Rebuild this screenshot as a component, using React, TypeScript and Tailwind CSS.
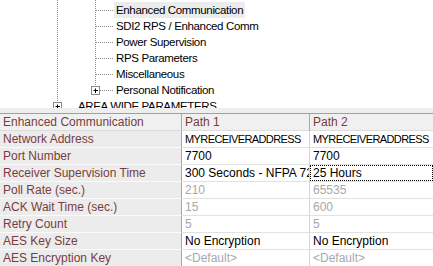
import { Fragment } from 'react'

type Row = {
  label: string
  p1: string
  p2: string
  dim?: boolean
  caps?: boolean
}

const rows: Row[] = [
  { label: 'Network Address', p1: 'MYRECEIVERADDRESS', p2: 'MYRECEIVERADDRESS', caps: true },
  { label: 'Port Number', p1: '7700', p2: '7700' },
  { label: 'Receiver Supervision Time', p1: '300 Seconds - NFPA 72 2010', p2: '25 Hours' },
  { label: 'Poll Rate (sec.)', p1: '210', p2: '65535', dim: true },
  { label: 'ACK Wait Time (sec.)', p1: '15', p2: '600', dim: true },
  { label: 'Retry Count', p1: '5', p2: '5', dim: true },
  { label: 'AES Key Size', p1: 'No Encryption', p2: 'No Encryption' },
  { label: 'AES Encryption Key', p1: '<Default>', p2: '<Default>', dim: true },
]

const treeItems = [
  'Enhanced Communication',
  'SDI2 RPS / Enhanced Comm',
  'Power Supervision',
  'RPS Parameters',
  'Miscellaneous',
  'Personal Notification',
]

function TreeLines() {
  const dot = { stroke: '#8a8a8a', strokeDasharray: '1 1', strokeWidth: 1 }
  return (
    <svg className="absolute left-0 top-0" width="140" height="108">
      <line x1="57.5" y1="0" x2="57.5" y2="102" {...dot} />
      <line x1="95.5" y1="0" x2="95.5" y2="86" {...dot} />
      {[10.5, 26.5, 42.5, 58.5, 74.5].map((y) => (
        <line key={y} x1="96" y1={y} x2="114" y2={y} {...dot} />
      ))}
      <line x1="100" y1="90.5" x2="114" y2="90.5" {...dot} />
      <rect x="91.5" y="86.5" width="8" height="8" fill="#fff" stroke="#8a8a8a" />
      <line x1="93.5" y1="90.5" x2="98" y2="90.5" stroke="#000" />
      <line x1="95.5" y1="88.5" x2="95.5" y2="93" stroke="#000" />
      <rect x="53.5" y="102.5" width="8" height="8" fill="#fff" stroke="#8a8a8a" />
      <line x1="55.5" y1="106.5" x2="60" y2="106.5" stroke="#000" />
      <line x1="57.5" y1="104.5" x2="57.5" y2="109" stroke="#000" />
    </svg>
  )
}

export default function App() {
  return (
    <div className="w-[433px] h-[266px] overflow-hidden bg-white font-['Liberation_Sans',Arial,sans-serif]">
      <div className="relative h-[108px] overflow-hidden pt-[2px] text-[11.5px] tracking-[-0.35px] leading-4 text-black">
        <TreeLines />
        {treeItems.map((t, i) => (
          <div key={t} className="relative ml-[114px] h-4">
            <span className={i === 0 ? 'inline-block h-4 bg-[#ececec] pl-[2px] pr-[2px]' : 'inline-block h-4 pl-[2px]'}>
              {t}
            </span>
          </div>
        ))}
        <div className="relative ml-[76px] h-4 pl-[2px]">AREA WIDE PARAMETERS</div>
      </div>

      <div className="h-[5px] bg-[#eeeeee]" />

      <div className="grid grid-cols-[182px_128px_1fr] border-t border-[#a0a0a0] text-[12px] leading-4">
        <div className="h-[17px] overflow-hidden whitespace-nowrap border-b border-r border-b-[#dcdcdc] border-r-[#a8a8a8] bg-[#f0f0f0] px-[3px] text-[#7a3c3c]">
          Enhanced Communication
        </div>
        <div className="h-[17px] overflow-hidden whitespace-nowrap border-b border-r border-b-[#dcdcdc] border-r-[#a8a8a8] bg-[#f0f0f0] px-[3px] text-[#7a3c3c]">
          Path 1
        </div>
        <div className="h-[17px] overflow-hidden whitespace-nowrap border-b border-[#dcdcdc] bg-[#f0f0f0] px-[3px] text-[#7a3c3c]">
          Path 2
        </div>

        {rows.map((r) => (
          <Fragment key={r.label}>
            <div className="h-[17px] overflow-hidden whitespace-nowrap border-b border-r border-b-[#fafafa] border-r-[#a8a8a8] bg-[#ececec] px-[3px] text-[#7a3c3c]">
              {r.label}
            </div>
            <div
              className={`h-[17px] overflow-hidden whitespace-nowrap border-b border-r border-b-[#e2e2e2] border-r-[#d4d4d4] px-[3px] ${
                r.dim ? 'text-[#a8a8a8]' : 'text-black'
              } ${r.caps ? 'text-[11px] tracking-[-0.6px]' : ''}`}
            >
              {r.p1}
            </div>
            {r.label === 'Receiver Supervision Time' ? (
              <div className="h-[17px] overflow-hidden whitespace-nowrap border-b border-[#e2e2e2]">
                <div className="h-4 border border-dotted border-black px-[2px] leading-[14px] text-black">{r.p2}</div>
              </div>
            ) : (
              <div
                className={`h-[17px] overflow-hidden whitespace-nowrap border-b border-[#e2e2e2] px-[3px] ${
                  r.dim ? 'text-[#a8a8a8]' : 'text-black'
                } ${r.caps ? 'text-[11px] tracking-[-0.6px]' : ''}`}
              >
                {r.p2}
              </div>
            )}
          </Fragment>
        ))}
      </div>
    </div>
  )
}
